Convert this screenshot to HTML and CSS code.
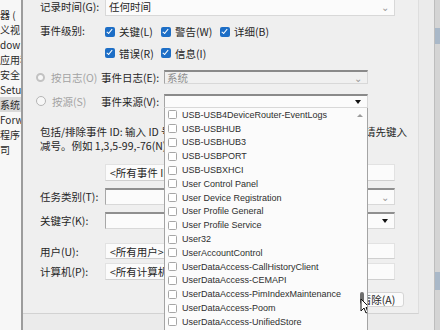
FILE: index.html
```html
<!DOCTYPE html>
<html>
<head>
    <title>筛选当前日志</title>
    <meta charset="UTF-8">
    <link rel="stylesheet" href="styles.css">
</head>
<body>
    <div class="screen">
        <aside class="tree">
            <div class="node">器 (</div>
            <div class="node">义视</div>
            <div class="node">dow</div>
            <div class="node">应用程</div>
            <div class="node">安全</div>
            <div class="node">Setup</div>
            <div class="node selected">系统</div>
            <div class="node">Forw</div>
            <div class="node">程序</div>
            <div class="node">司</div>
        </aside>

        <div class="dialog">
            <div class="page">
                <div class="row row-time">
                    <span class="label">记录时间(G):</span>
                    <div class="field combo">
                        <span class="value">任何时间</span>
                        <span class="chevron">&#8964;</span>
                    </div>
                </div>

                <div class="row row-level">
                    <span class="label">事件级别:</span>
                    <div class="checks">
                        <label class="check c1"><i class="box"></i>关键(L)</label>
                        <label class="check c2"><i class="box"></i>警告(W)</label>
                        <label class="check"><i class="box"></i>详细(B)</label>
                    </div>
                </div>

                <div class="row row-level2">
                    <span class="label"></span>
                    <div class="checks">
                        <label class="check c1"><i class="box"></i>错误(R)</label>
                        <label class="check c2"><i class="box"></i>信息(I)</label>
                    </div>
                </div>

                <div class="row row-log">
                    <span class="option"><i class="radio"></i>按日志(O)</span>
                    <span class="label2">事件日志(E):</span>
                    <div class="combo short disabled">
                        <span class="value">系统</span>
                        <span class="chevron">&#8964;</span>
                    </div>
                </div>

                <div class="row row-src">
                    <span class="option"><i class="radio"></i>按源(S)</span>
                    <span class="label2">事件来源(V):</span>
                    <div class="combo short">
                        <span class="value"></span>
                        <span class="arrow"></span>

                        <div class="droplist">
                            <div class="item"><i class="cb"></i>USB-USB4DeviceRouter-EventLogs</div>
                            <div class="item"><i class="cb"></i>USB-USBHUB</div>
                            <div class="item"><i class="cb"></i>USB-USBHUB3</div>
                            <div class="item"><i class="cb"></i>USB-USBPORT</div>
                            <div class="item"><i class="cb"></i>USB-USBXHCI</div>
                            <div class="item"><i class="cb"></i>User Control Panel</div>
                            <div class="item"><i class="cb"></i>User Device Registration</div>
                            <div class="item"><i class="cb"></i>User Profile General</div>
                            <div class="item"><i class="cb"></i>User Profile Service</div>
                            <div class="item"><i class="cb"></i>User32</div>
                            <div class="item"><i class="cb"></i>UserAccountControl</div>
                            <div class="item"><i class="cb"></i>UserDataAccess-CallHistoryClient</div>
                            <div class="item"><i class="cb"></i>UserDataAccess-CEMAPI</div>
                            <div class="item"><i class="cb"></i>UserDataAccess-PimIndexMaintenance</div>
                            <div class="item"><i class="cb"></i>UserDataAccess-Poom</div>
                            <div class="item"><i class="cb"></i>UserDataAccess-UnifiedStore</div>
                            <span class="scroll-up"></span>
                            <span class="thumb"></span>
                            <svg class="cursor" width="10" height="16" viewBox="0 0 10 16">
                                <path d="M1 1 L1 13 L4 10 L6 15 L8 14 L6 9.5 L9.5 9.5 Z" fill="#fff" stroke="#111" stroke-width="1"/>
                            </svg>
                        </div>
                    </div>
                </div>

                <div class="hint">
                    <div class="hint-line">
                        <span>包括/排除事件 ID: 输入 ID 号和</span>
                        <span class="hint-mid">/或 ID 范围，使用逗号分隔。若要排除条件，</span>
                        <span>请先键入</span>
                    </div>
                    <div class="hint-line">减号。例如 1,3,5-99,-76(N)</div>
                </div>

                <div class="row row-id">
                    <span class="label"></span>
                    <div class="field input">&lt;所有事件 ID&gt;</div>
                </div>

                <div class="row row-task">
                    <span class="label">任务类别(T):</span>
                    <div class="field combo list">
                        <span class="value"></span>
                        <span class="chevron">&#8964;</span>
                    </div>
                </div>

                <div class="row row-key">
                    <span class="label">关键字(K):</span>
                    <div class="field combo list">
                        <span class="value"></span>
                        <span class="arrow"></span>
                    </div>
                </div>

                <div class="row row-user">
                    <span class="label">用户(U):</span>
                    <div class="field input">&lt;所有用户&gt;</div>
                </div>

                <div class="row row-pc">
                    <span class="label">计算机(P):</span>
                    <div class="field input">&lt;所有计算机&gt;</div>
                </div>

                <div class="actions">
                    <button class="btn">清除(A)</button>
                </div>
            </div>
        </div>

        <div class="edge">
            <span class="edge-blue top"></span>
            <span class="edge-blue bottom"></span>
        </div>
    </div>
</body>
</html>
```

FILE: styles.css
```css
body {
    margin: 0;
    width: 440px;
    height: 330px;
    overflow: hidden;
    font-family: "Noto Sans CJK SC", "Noto Sans", sans-serif;
    font-size: 10.5px;
    color: #262626;
    background-color: #ececec;
}
.screen {
    display: flex;
    height: 330px;
    overflow: hidden;
}

/* tree of the event viewer behind the dialog */
.tree {
    width: 21px;
    flex: none;
    padding-top: 7px;
    background-color: #f7f7f7;
    border-right: 2px solid #9c9c9c;
    overflow: hidden;
}
.node {
    height: 15px;
    line-height: 15px;
    font-size: 10px;
    white-space: nowrap;
    color: #2a2a2a;
}
.node.selected {
    background-color: #d9d9d9;
}

.dialog {
    flex: 1;
    background-color: #ebebeb;
    border-right: 1px solid #bdbdbd;
}
.page {
    height: 317px;
    box-sizing: border-box;
    width: 396px;
    padding-left: 17px;
    background-color: #efefef;
    border-right: 1px solid #dedede;
    border-bottom: 1px solid #d2d2d2;
}
.edge {
    width: 5px;
    flex: none;
    position: relative;
    background-color: #d4d4d4;
}
.edge-blue {
    position: absolute;
    left: 0;
    right: 0;
    background-color: #a9b8c8;
}
.edge-blue.top { top: 28px; height: 16px; }
.edge-blue.bottom { top: 272px; height: 18px; }

/* rows */
.row {
    display: flex;
    align-items: center;
}
.label {
    width: 65px;
    flex: none;
}
.field {
    width: 290px;
    box-sizing: border-box;
    background-color: #fbfbfb;
}
.row-time { margin-top: -3px; height: 19px; }
.row-level { margin-top: 9px; height: 13px; align-items: flex-start; }
.row-level .label { line-height: 11px; }
.row-level2 { margin-top: 8px; height: 14px; }
.row-log { margin-top: 10px; height: 14px; }
.row-src { margin-top: 10px; height: 14px; }
.row-id { margin-top: 11px; height: 17px; }
.row-task { margin-top: 7px; height: 17px; }
.row-key { margin-top: 7px; height: 17px; }
.row-user { margin-top: 14px; height: 16px; }
.row-pc { margin-top: 4px; height: 17px; }

.combo {
    display: flex;
    align-items: center;
    height: 100%;
    padding-left: 3px;
    box-sizing: border-box;
    border: 1px solid #d8d8d8;
    background-color: #fbfbfb;
    position: relative;
}
.combo .value {
    flex: 1;
}
.combo.list {
    border-top: 2px solid #8f8f8f;
    border-left: 1px solid #a8a8a8;
}
.chevron {
    width: 12px;
    margin-right: 3px;
    color: #9a9a9a;
    font-size: 10px;
    line-height: 8px;
    text-align: center;
}
.arrow {
    width: 0;
    height: 0;
    margin-right: 6px;
    border-left: 3.5px solid transparent;
    border-right: 3.5px solid transparent;
    border-top: 4px solid #111;
}
.input {
    height: 100%;
    padding-left: 4px;
    display: flex;
    align-items: center;
    border: 1px solid #e2e2e2;
    border-bottom-color: #cfcfcf;
}

/* level checkboxes */
.checks {
    display: flex;
}
.check {
    display: flex;
    align-items: center;
    line-height: 13px;
}
.check.c1 { width: 56px; }
.check.c2 { width: 59px; }
.box {
    width: 10px;
    height: 10px;
    margin-right: 4px;
    border-radius: 2px;
    background-color: #1d6ec6;
    position: relative;
}
.box::after {
    content: "";
    position: absolute;
    left: 3.2px;
    top: 1.2px;
    width: 2.4px;
    height: 4.8px;
    border-right: 1.2px solid #fff;
    border-bottom: 1.2px solid #fff;
    transform: rotate(40deg);
}

/* log / source rows */
.option {
    width: 65px;
    flex: none;
    margin-left: -4px;
    display: flex;
    align-items: center;
    color: #a3a3a3;
}
.radio {
    width: 8px;
    height: 8px;
    margin-right: 6px;
    border-radius: 50%;
    border: 1px solid #b5b5b5;
    background-color: #f7f7f7;
}
.row-log .radio {
    border: 2.5px solid #c2c2c2;
    width: 5px;
    height: 5px;
}
.label2 {
    width: 63px;
    flex: none;
}
.combo.short {
    width: 204px;
    border-top: 2px solid #8a8a8a;
    border-left: 1px solid #a5a5a5;
    padding-left: 2px;
}
.combo.disabled {
    background-color: #f0f0f0;
    color: #8c8c8c;
}

/* popup list of the source combobox */
.droplist {
    position: absolute;
    left: -1px;
    top: 12px;
    width: 202px;
    height: 232px;
    background-color: #fbfbfb;
    border-left: 1px solid #a4a4a4;
    border-right: 1px solid #a4a4a4;
    color: #2e2e2e;
    z-index: 2;
    font-family: "Liberation Sans", Arial, sans-serif;
    font-size: 9px;
    overflow: hidden;
}
.item {
    height: 13.8px;
    display: flex;
    align-items: center;
    white-space: nowrap;
    padding-left: 3px;
}
.cb {
    width: 7px;
    height: 7px;
    margin-right: 5px;
    border: 1px solid #a6a6a6;
    border-radius: 1.5px;
    background-color: #fff;
}
.scroll-up {
    position: absolute;
    right: 4px;
    top: 6px;
    width: 0;
    height: 0;
    border-left: 3px solid transparent;
    border-right: 3px solid transparent;
    border-bottom: 3px solid #9b9b9b;
}
.thumb {
    position: absolute;
    right: 3px;
    top: 184px;
    width: 4px;
    height: 12px;
    border-radius: 2px;
    background-color: #6f6f6f;
}
.cursor {
    position: absolute;
    right: -3px;
    top: 190px;
}

/* event id hint */
.hint {
    margin-top: 17px;
    width: 367px;
}
.hint-line {
    display: flex;
    height: 14px;
    line-height: 14px;
    white-space: nowrap;
}
.hint-mid {
    flex: 1;
    overflow: hidden;
}

.actions {
    width: 364px;
    margin-top: 12px;
    display: flex;
    justify-content: flex-end;
}
.btn {
    width: 52px;
    height: 15px;
    padding: 0;
    font: inherit;
    line-height: 13px;
    color: #262626;
    background-color: #fbfbfb;
    border: 1px solid #d5d5d5;
    border-radius: 3px;
}
```
